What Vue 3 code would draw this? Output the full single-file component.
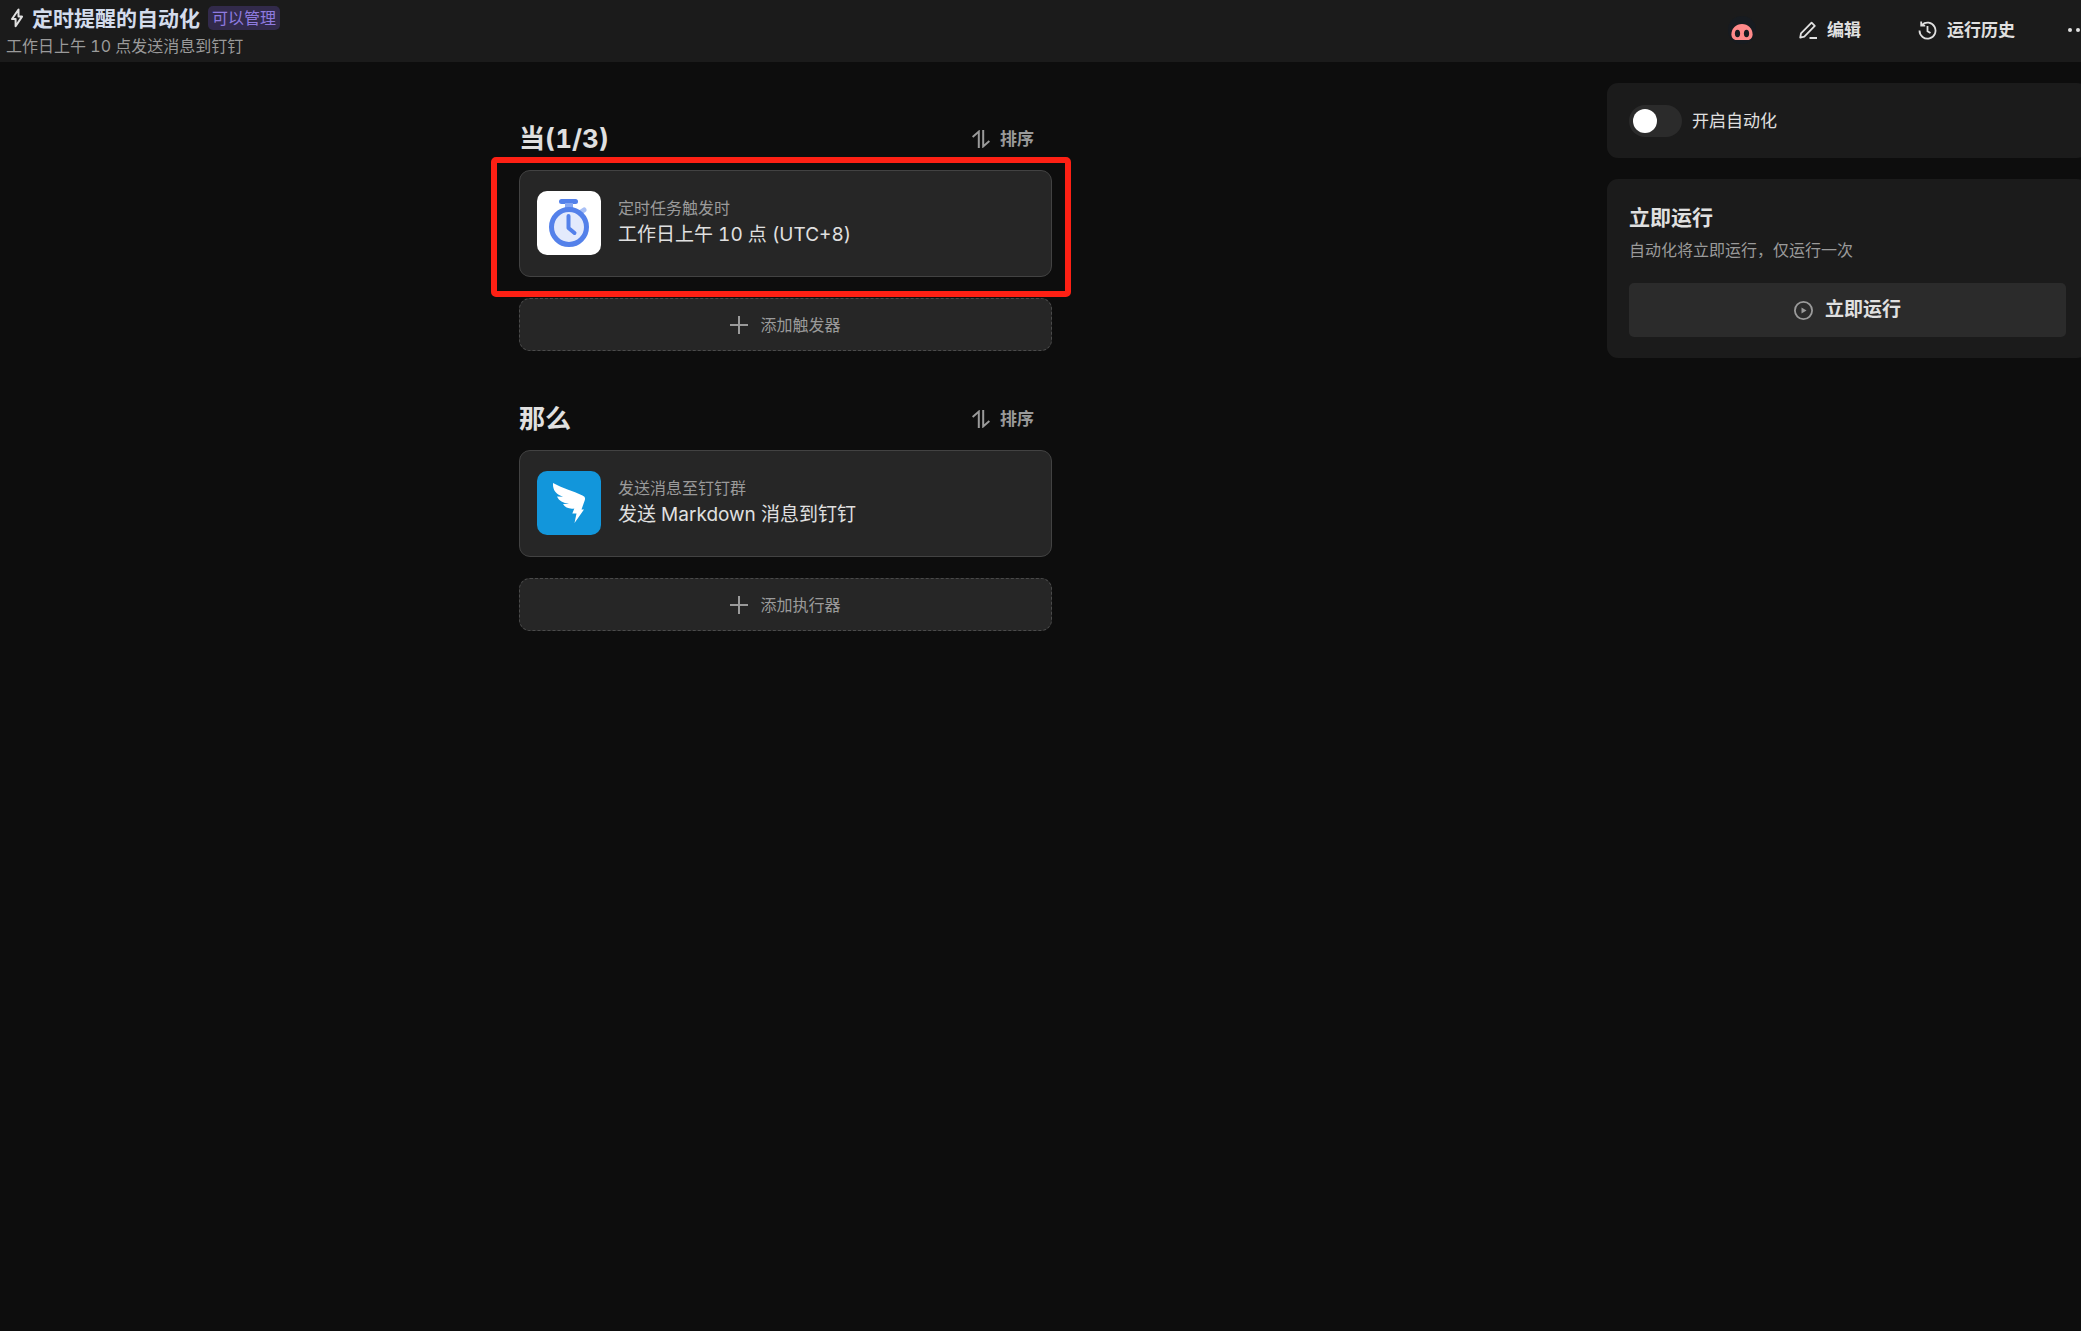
<script setup>
import { ref } from 'vue'

const enabled = ref(false)

const sections = [
  {
    id: 'trigger',
    title: '当(1/3)',
    icon: 'timer',
    label: '定时任务触发时',
    name: '工作日上午 10 点 (UTC+8)',
    add: '添加触发器',
    marked: true,
  },
  {
    id: 'action',
    title: '那么',
    icon: 'dingtalk',
    label: '发送消息至钉钉群',
    name: '发送 Markdown 消息到钉钉',
    add: '添加执行器',
    marked: false,
  },
]
</script>

<template>
  <div class="page">
    <header class="topbar">
      <div class="heading">
        <div class="title-row">
          <svg class="bolt" width="14" height="20" viewBox="0 0 14 20" fill="none" stroke="currentColor" stroke-width="2" stroke-linejoin="round">
            <path d="M8.5 1.5 2 11h3.6v7.2L12 8.6H8.5z" />
          </svg>
          <h1>定时提醒的自动化</h1>
          <span class="badge">可以管理</span>
        </div>
        <p class="subtitle">工作日上午 10 点发送消息到钉钉</p>
      </div>
      <nav class="actions">
        <span class="avatar">
          <svg width="22" height="16" viewBox="0 0 22 16">
            <path d="M5.500 16C2.200 16 .4 13.400.4 10.200.4 4.600 5 0 11 0s10.600 4.600 10.600 10.200c0 3.200-1.800 5.800-5.100 5.800z" fill="#ff8a8a" />
            <ellipse cx="6.500" cy="9.500" rx="2.600" ry="3.800" fill="#171b20" />
            <ellipse cx="15.500" cy="9.500" rx="2.600" ry="3.800" fill="#171b20" />
          </svg>
        </span>
        <button class="tool edit" type="button">
          <svg width="18" height="18" viewBox="0 0 18 18" fill="none" stroke="currentColor" stroke-width="1.800" stroke-linejoin="round">
            <path d="M1.200 16.600 2 12.400 12.600 1.600l3.200 3.200L5.300 15.700zM10.500 17H18" />
          </svg>
          编辑
        </button>
        <button class="tool history" type="button">
          <svg width="19" height="19" viewBox="0 0 19 19" fill="none" stroke="currentColor" stroke-width="1.800">
            <path d="M4 3.800A8 8 0 1 1 1.500 9.600M3.200.6v4h4M9.500 5v5.200l3 1.800" />
          </svg>
          运行历史
        </button>
        <button class="more" type="button" aria-label="更多">
          <svg width="20" height="4" viewBox="0 0 20 4" fill="currentColor">
            <circle cx="2" cy="2" r="2" /><circle cx="10" cy="2" r="2" /><circle cx="18" cy="2" r="2" />
          </svg>
        </button>
      </nav>
    </header>

    <div class="body">
      <main class="flow">
        <section v-for="s in sections" :key="s.id" class="step">
          <div class="step-head">
            <h2>{{ s.title }}</h2>
            <button class="sort" type="button">
              <svg width="18" height="18" viewBox="0 0 18 18" fill="none" stroke="currentColor" stroke-width="2">
                <path d="M.6 7 6.800 1.600V18M11.200 0v16.400L17.400 11" />
              </svg>
              排序
            </button>
          </div>
          <div class="card-wrap">
            <article class="card">
              <svg v-if="s.icon === 'timer'" class="logo" width="64" height="64" viewBox="0 0 64 64">
                <rect width="64" height="64" rx="10" fill="#fff" />
                <rect x="22" y="8" width="19" height="5" rx="2.500" fill="#5481ea" />
                <rect x="28" y="12" width="8" height="6" fill="#86a7f2" />
                <path d="m44 21 3-2" stroke="#a9c0f6" stroke-width="5" stroke-linecap="round" />
                <circle cx="32" cy="36" r="17.500" fill="#e3eafc" stroke="#5481ea" stroke-width="5" />
                <path d="M31.500 25v12l6 5" fill="none" stroke="#5481ea" stroke-width="4" stroke-linecap="round" stroke-linejoin="round" />
              </svg>
              <svg v-else class="logo" width="64" height="64" viewBox="0 0 64 64">
                <rect width="64" height="64" rx="10" fill="#1296db" />
                <path d="M16 12c9 5 20 8 29.500 12.500 2.500 1.200 3 2.500 2.200 5L44.500 38.500H47L37.500 52l2-9.500h-4.200l2-5c-5 .8-9.300-1-11.300-4.500l6-.3c-6-.7-10-2.700-12-7.200l6 .3C19 23.500 15.500 19 16 12z" fill="#fff" />
              </svg>
              <div class="card-text">
                <p class="label">{{ s.label }}</p>
                <p class="name">{{ s.name }}</p>
              </div>
            </article>
            <div v-if="s.marked" class="marker"></div>
          </div>
          <button class="add" type="button">
            <svg width="18" height="18" viewBox="0 0 18 18" fill="none" stroke="currentColor" stroke-width="2">
              <path d="M9 0v18M0 9h18" />
            </svg>
            {{ s.add }}
          </button>
        </section>
      </main>

      <aside class="side">
        <div class="panel toggle-panel">
          <input id="enable" v-model="enabled" class="switch" type="checkbox" role="switch" />
          <label for="enable">开启自动化</label>
        </div>
        <div class="panel run-panel">
          <h3>立即运行</h3>
          <p>自动化将立即运行，仅运行一次</p>
          <button class="run" type="button">
            <svg width="19" height="19" viewBox="0 0 19 19" fill="none">
              <circle cx="9.500" cy="9.500" r="8.600" stroke="currentColor" stroke-width="1.800" />
              <path d="M7.500 6.500v6l5-3z" fill="currentColor" />
            </svg>
            <span>立即运行</span>
          </button>
        </div>
      </aside>
    </div>
  </div>
</template>

<style>
html,
body {
  background: #0d0d0d;
}
</style>

<style scoped>
.page {
  min-height: 100vh;
  overflow: hidden;
  background: #0d0d0d;
  color: #e0e0e0;
  font-family: Inter, "Noto Sans CJK SC", sans-serif;
  font-size: 16px;
  font-variant-numeric: tabular-nums;
  line-height: 24px;
}

h1,
h2,
h3,
p {
  margin: 0;
}

svg {
  display: block;
  flex: none;
}

button {
  display: flex;
  align-items: center;
  padding: 0;
  border: 0;
  background: none;
  color: inherit;
  font: inherit;
  font-variant-numeric: inherit;
  cursor: pointer;
}

.topbar {
  display: flex;
  justify-content: space-between;
  height: 62px;
  background: #1b1b1b;
}

.heading {
  padding: 6px 0 0 6px;
}

.title-row {
  display: flex;
  align-items: center;
  height: 24px;
}

.bolt {
  margin: 0 8px 0 4px;
}

h1 {
  padding-top: 2px;
  color: #d3dcec;
  font-size: 21px;
  line-height: 24px;
  font-weight: 700;
}

.badge {
  margin-left: 8px;
  padding: 0 4px;
  border-radius: 5px;
  background: #322a4b;
  color: #8f7be0;
}

.subtitle {
  margin-top: 4px;
  color: #9a9a9a;
}

.actions {
  display: flex;
  align-items: center;
  height: 60px;
  margin-right: -7px;
}

.avatar {
  display: flex;
  justify-content: center;
  padding: 8px 3px 4px;
  border-radius: 50%;
  background: #171b20;
  margin-right: 43px;
}

.tool {
  gap: 10px;
  font-size: 17px;
  font-weight: 700;
}

.edit {
  margin-right: 57px;
}

.history {
  margin-right: 53px;
}

.body {
  display: flex;
  gap: 36px;
  margin-right: -7px;
}

.flow {
  flex: 1;
  display: flex;
  flex-direction: column;
  align-items: center;
  gap: 51px;
  padding-top: 60px;
}

.step {
  width: 100%;
  max-width: 533px;
}

.step-head {
  display: flex;
  align-items: center;
  justify-content: space-between;
  height: 34px;
  margin-bottom: 14px;
  padding-right: 18px;
}

h2 {
  font-size: 26px;
  line-height: 34px;
  font-weight: 700;
}

.sort {
  gap: 10px;
  color: #9a9a9a;
  font-size: 17px;
  font-weight: 700;
}

.card-wrap {
  position: relative;
}

.card {
  box-sizing: border-box;
  display: flex;
  align-items: center;
  gap: 17px;
  height: 107px;
  padding: 0 17px 2px;
  border: 1px solid #424242;
  border-radius: 11px;
  background: #262626;
}

.label {
  color: #9a9a9a;
}

.name {
  padding-top: 1px;
  font-size: 19px;
  line-height: 28px;
}

.marker {
  position: absolute;
  inset: -13px -19px -20px -28px;
  border: 6px solid #fd2014;
  border-radius: 5px;
  pointer-events: none;
}

.add {
  box-sizing: border-box;
  justify-content: center;
  gap: 12px;
  width: 100%;
  height: 53px;
  margin-top: 21px;
  border: 1px dashed #4a4a4a;
  border-radius: 11px;
  background: #262626;
  color: #9a9a9a;
}

.side {
  flex: none;
  display: flex;
  flex-direction: column;
  gap: 21px;
  width: 481px;
  padding-top: 21px;
}

.panel {
  padding: 22px;
  border-radius: 11px;
  background: #1b1b1b;
}

.toggle-panel {
  display: flex;
  align-items: center;
  gap: 10px;
  padding-bottom: 21px;
  font-size: 17px;
}

.switch {
  appearance: none;
  display: flex;
  align-items: center;
  width: 53px;
  height: 32px;
  margin: 0;
  padding: 0 4px;
  border-radius: 16px;
  background: #2b2b2b;
  cursor: pointer;
}

.switch::before {
  content: "";
  width: 24px;
  height: 24px;
  border-radius: 50%;
  background: #fff;
}

.switch:checked {
  justify-content: flex-end;
  background: #7b67ee;
}

.run-panel {
  padding-bottom: 21px;
}

h3 {
  font-size: 21px;
  line-height: 34px;
  font-weight: 700;
}

.run-panel p {
  margin-top: 3px;
  color: #9a9a9a;
}

.run {
  justify-content: center;
  gap: 12px;
  width: 100%;
  height: 54px;
  margin-top: 21px;
  border-radius: 5px;
  background: #2b2b2b;
  color: #9a9a9a;
}

.run span {
  color: #e0e0e0;
  font-size: 19px;
  font-weight: 700;
}
</style>
